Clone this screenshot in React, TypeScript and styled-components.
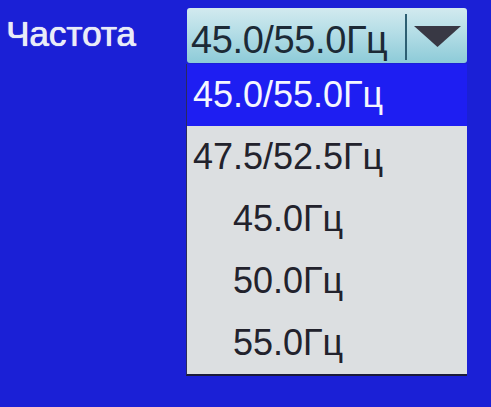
import styled, { createGlobalStyle } from "styled-components";

const Global = createGlobalStyle`
  html, body {
    margin: 0;
    padding: 0;
    background: #1b20d6;
  }
  body {
    font-family: "Liberation Sans", Arial, sans-serif;
  }
`;

const Screen = styled.div`
  width: 491px;
  height: 407px;
  box-sizing: border-box;
  padding: 8px 0 0 6px;
  background: #1b20d6;
  display: flex;
  align-items: flex-start;
  overflow: hidden;
`;

const Label = styled.div`
  width: 181px;
  margin-top: 6px;
  font-size: 35px;
  line-height: 40px;
  color: #e8ecf8;
  text-shadow: 0 0 1px #e8ecf8, 0.5px 0 0 #e8ecf8;
`;

const Field = styled.div`
  width: 280px;
  display: flex;
  flex-direction: column;
`;

const Combo = styled.div`
  height: 55px;
  box-sizing: border-box;
  display: flex;
  align-items: stretch;
  border-radius: 3px;
  background: linear-gradient(180deg, #d2eaef 0%, #b4dde6 45%, #8dcbd8 100%);
`;

const ComboText = styled.div`
  flex: 1;
  padding: 9px 0 0 4px;
  font-size: 38px;
  line-height: 46px;
  letter-spacing: -0.4px;
  color: #1c2a36;
`;

const Divider = styled.div`
  width: 2px;
  margin: 6px 0 3px;
  background: #2c5f72;
`;

const Arrow = styled.div`
  width: 60px;
  display: flex;
  align-items: flex-start;
  justify-content: center;
  padding-top: 18px;
  box-sizing: border-box;
`;

const List = styled.div`
  margin-top: 1px;
  margin-left: -1px;
  display: flex;
  flex-direction: column;
  background: #dcdfe1;
  border-bottom: 2px solid #1b1b3a;
  border-left: 1px solid #2a2a60;
`;

const Item = styled.div<{ $selected?: boolean }>`
  height: 62px;
  box-sizing: border-box;
  padding-right: 78px;
  text-align: center;
  font-size: 36px;
  line-height: 62px;
  white-space: nowrap;
  color: ${(p) => (p.$selected ? "#f4f6ff" : "#22222c")};
  background: ${(p) => (p.$selected ? "#1e1ef2" : "transparent")};
`;

const options = ["45.0/55.0Гц", "47.5/52.5Гц", "45.0Гц", "50.0Гц", "55.0Гц"];

export default function App() {
  const current = options[0];
  return (
    <>
      <Global />
      <Screen>
        <Label>Частота</Label>
        <Field>
          <Combo>
            <ComboText>{current}</ComboText>
            <Divider />
            <Arrow>
              <svg width="47" height="21" viewBox="0 0 47 21">
                <polygon points="0,0 47,0 23.5,21" fill="#383844" />
              </svg>
            </Arrow>
          </Combo>
          <List>
            {options.map((o) => (
              <Item key={o} $selected={o === current}>
                {o}
              </Item>
            ))}
          </List>
        </Field>
      </Screen>
    </>
  );
}
